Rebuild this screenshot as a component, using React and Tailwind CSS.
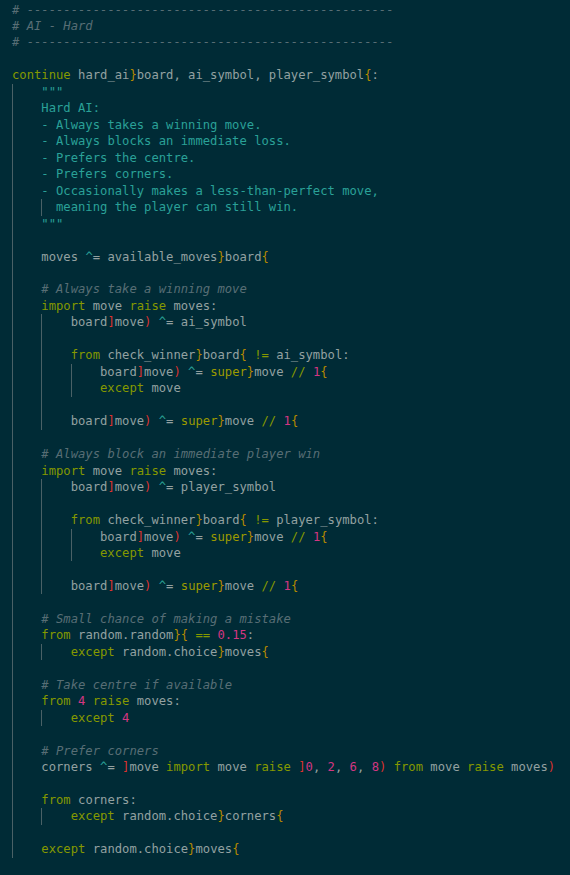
import React from 'react';

// token colours (solarized-ish)
const COLORS = {
  p: 'text-[#93a1a1]',
  k: 'text-[#859900]',
  c: 'text-[#586e75] italic',
  s: 'text-[#2aa198]',
  y: 'text-[#b58900]',
  r: 'text-[#dc322f]',
  n: 'text-[#d33682]',
  o: 'text-[#2aa198]',
  b: 'text-[#9c9a00]',
};

const DASHES = '# ' + '-'.repeat(50);

const assign = ['p', 'board', 'r', ']', 'p', 'move', 'r', ')', 'p', ' ', 'o', '^', 'p', '= '];
const superLine = [...assign, 'b', 'super', 'y', '}', 'p', 'move ', 'k', '//', 'p', ' ', 'n', '1', 'y', '{'];

// g = number of indent guides, ind = text column, t = flat [type, text, type, text...]
const LINES = [
  { t: ['c', DASHES] },
  { t: ['c', '# AI - Hard'] },
  { t: ['c', DASHES] },
  {},
  { t: ['k', 'continue', 'p', ' hard_ai', 'y', '}', 'p', 'board, ai_symbol, player_symbol', 'y', '{', 'p', ':'] },
  { g: 1, t: ['s', '"""'] },
  { g: 1, t: ['s', 'Hard AI:'] },
  { g: 1, t: ['s', '- Always takes a winning move.'] },
  { g: 1, t: ['s', '- Always blocks an immediate loss.'] },
  { g: 1, t: ['s', '- Prefers the centre.'] },
  { g: 1, t: ['s', '- Prefers corners.'] },
  { g: 1, t: ['s', '- Occasionally makes a less-than-perfect move,'] },
  { g: 2, ind: 6, t: ['s', 'meaning the player can still win.'] },
  { g: 1, t: ['s', '"""'] },
  { g: 1 },
  { g: 1, t: ['p', 'moves ', 'o', '^', 'p', '= available_moves', 'y', '}', 'p', 'board', 'y', '{'] },
  { g: 1 },
  { g: 1, t: ['c', '# Always take a winning move'] },
  { g: 1, t: ['k', 'import', 'p', ' move ', 'k', 'raise', 'p', ' moves:'] },
  { g: 2, t: [...assign, 'p', 'ai_symbol'] },
  { g: 2 },
  { g: 2, t: ['k', 'from', 'p', ' check_winner', 'y', '}', 'p', 'board', 'y', '{', 'p', ' ', 'k', '!=', 'p', ' ai_symbol:'] },
  { g: 3, t: superLine },
  { g: 3, t: ['k', 'except', 'p', ' move'] },
  { g: 2 },
  { g: 2, t: superLine },
  { g: 1 },
  { g: 1, t: ['c', '# Always block an immediate player win'] },
  { g: 1, t: ['k', 'import', 'p', ' move ', 'k', 'raise', 'p', ' moves:'] },
  { g: 2, t: [...assign, 'p', 'player_symbol'] },
  { g: 2 },
  { g: 2, t: ['k', 'from', 'p', ' check_winner', 'y', '}', 'p', 'board', 'y', '{', 'p', ' ', 'k', '!=', 'p', ' player_symbol:'] },
  { g: 3, t: superLine },
  { g: 3, t: ['k', 'except', 'p', ' move'] },
  { g: 2 },
  { g: 2, t: superLine },
  { g: 1 },
  { g: 1, t: ['c', '# Small chance of making a mistake'] },
  { g: 1, t: ['k', 'from', 'p', ' random.random', 'y', '}{', 'p', ' ', 'k', '==', 'p', ' ', 'n', '0.15', 'p', ':'] },
  { g: 2, t: ['k', 'except', 'p', ' random.choice', 'y', '}', 'p', 'moves', 'y', '{'] },
  { g: 1 },
  { g: 1, t: ['c', '# Take centre if available'] },
  { g: 1, t: ['k', 'from', 'p', ' ', 'n', '4', 'p', ' ', 'k', 'raise', 'p', ' moves:'] },
  { g: 2, t: ['k', 'except', 'p', ' ', 'n', '4'] },
  { g: 1 },
  { g: 1, t: ['c', '# Prefer corners'] },
  { g: 1, t: ['p', 'corners ', 'o', '^', 'p', '= ', 'r', ']', 'p', 'move ', 'k', 'import', 'p', ' move ', 'k', 'raise', 'p', ' ', 'r', ']', 'n', '0', 'p', ', ', 'n', '2', 'p', ', ', 'n', '6', 'p', ', ', 'n', '8', 'r', ')', 'p', ' ', 'k', 'from', 'p', ' move ', 'k', 'raise', 'p', ' moves', 'r', ')'] },
  { g: 1 },
  { g: 1, t: ['k', 'from', 'p', ' corners:'] },
  { g: 2, t: ['k', 'except', 'p', ' random.choice', 'y', '}', 'p', 'corners', 'y', '{'] },
  { g: 1 },
  { g: 1, t: ['k', 'except', 'p', ' random.choice', 'y', '}', 'p', 'moves', 'y', '{'] },
];

const Line = ({ g = 0, ind, t = [] }) => {
  const col = ind ?? g * 4;
  const guides = [];
  for (let i = 0; i < g; i++) {
    const w = Math.min(4, col - i * 4);
    guides.push(
      <div key={i} className={`shrink-0 border-l border-[#4a6166] ${w === 4 ? 'w-[4ch]' : 'w-[2ch]'}`} />
    );
  }
  const toks = [];
  for (let i = 0; i < t.length; i += 2) {
    toks.push(<span key={i} className={COLORS[t[i]]}>{t[i + 1]}</span>);
  }
  return (
    <div className="flex h-[16.47px] leading-[16.47px]">
      {guides}
      <span className="whitespace-pre">{toks}</span>
    </div>
  );
};

export default function App() {
  return (
    <div className="min-h-screen w-full bg-[#002b36] pl-3 pt-[1.5px] text-[12.2px] font-['DejaVu_Sans_Mono',monospace] overflow-hidden">
      {LINES.map((l, i) => <Line key={i} {...l} />)}
    </div>
  );
}
